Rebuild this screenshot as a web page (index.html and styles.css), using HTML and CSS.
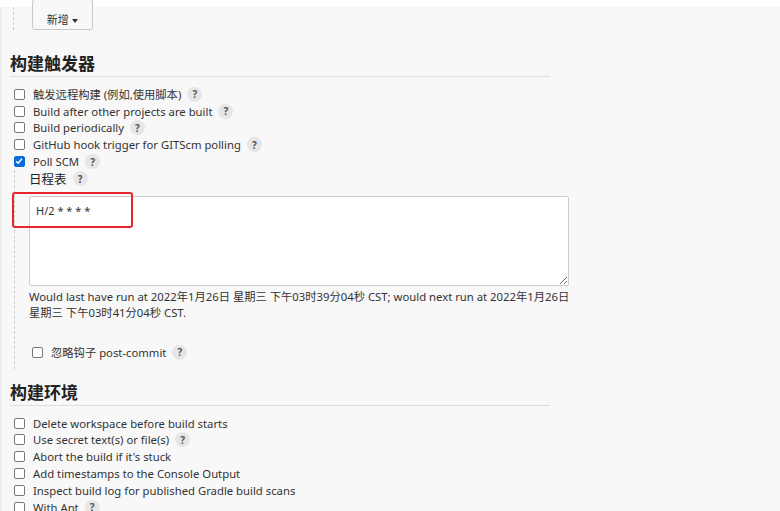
FILE: index.html
```html
<!DOCTYPE html>
<html>
<head>
    <meta charset="UTF-8">
    <title>构建配置</title>
    <link rel="stylesheet" href="styles.css">
</head>
<body>
    <div class="top-strip"></div>
    <div class="page">
        <div class="repeat-block">
            <button class="add-button">新增 <span class="caret"></span></button>
        </div>

        <h2 class="section-title">构建触发器</h2>
        <ul class="options">
            <li><span class="box"></span>触发远程构建 (例如,使用脚本) <span class="help">?</span></li>
            <li><span class="box"></span>Build after other projects are built <span class="help">?</span></li>
            <li><span class="box"></span>Build periodically <span class="help">?</span></li>
            <li><span class="box"></span>GitHub hook trigger for GITScm polling <span class="help">?</span></li>
            <li><span class="box checked"><svg viewBox="0 0 10 10" width="10" height="10"><path d="M2.2 5.2 L4.2 7.2 L7.9 2.8" fill="none" stroke="#fff" stroke-width="1.5"/></svg></span>Poll SCM <span class="help">?</span></li>
        </ul>

        <div class="nested">
            <div class="field-label">日程表 <span class="help">?</span></div>
            <div class="schedule">
                <textarea class="schedule-input">H/2 * * * *</textarea>
                <div class="highlight"></div>
            </div>
            <div class="schedule-info">Would last have run at 2022年1月26日 星期三 下午03时39分04秒 CST; would next run at 2022年1月26日 星期三 下午03时41分04秒 CST.</div>
            <ul class="options inner">
                <li><span class="box"></span>忽略钩子 post-commit <span class="help">?</span></li>
            </ul>
        </div>

        <h2 class="section-title second">构建环境</h2>
        <ul class="options">
            <li><span class="box"></span>Delete workspace before build starts</li>
            <li><span class="box"></span>Use secret text(s) or file(s) <span class="help">?</span></li>
            <li><span class="box"></span>Abort the build if it's stuck</li>
            <li><span class="box"></span>Add timestamps to the Console Output</li>
            <li><span class="box"></span>Inspect build log for published Gradle build scans</li>
            <li><span class="box"></span>With Ant <span class="help">?</span></li>
        </ul>
    </div>
</body>
</html>
```

FILE: styles.css
```css
html, body {
    margin: 0;
    padding: 0;
    height: 100%;
    overflow: hidden;
}
body {
    font-family: 'Noto Sans', 'Noto Sans CJK SC', sans-serif;
    font-size: 11.3px;
    color: #333;
    background: #fff;
}
.top-strip {
    height: 7px;
    background: #fff;
}
.page {
    background: #f8f8f8;
    border-left: 2px solid #eee;
    padding-left: 8px;
    min-height: 504px;
    box-sizing: border-box;
}
.repeat-block {
    margin-left: 3px;
    border-left: 1px dashed #ccc;
    height: 23px;
    padding-left: 18px;
}
.add-button {
    display: block;
    position: relative;
    top: -8px;
    height: 31px;
    width: 61px;
    padding: 8px 0 0;
    background: #f8f8f8;
    border: 1px solid #c8c8c8;
    border-radius: 3px;
    font-family: 'Noto Sans CJK SC', sans-serif;
    font-size: 11px;
    color: #333;
}
.caret {
    display: inline-block;
    width: 0;
    height: 0;
    border-left: 3px solid transparent;
    border-right: 3px solid transparent;
    border-top: 4px solid #333;
    vertical-align: middle;
    margin-left: 1px;
}
.section-title {
    font-family: 'Noto Sans CJK SC', sans-serif;
    font-size: 17px;
    font-weight: 700;
    color: #222;
    margin: 21px 0 0;
    width: 540px;
    line-height: 24px;
    border-bottom: 1px solid #ddd;
    padding-bottom: 1px;
}
.section-title.second {
    margin-top: 11px;
}
.options {
    list-style: none;
    margin: 9px 0 0;
    padding: 0 0 0 4px;
}
.options li {
    display: flex;
    align-items: center;
    height: 16.8px;
    white-space: nowrap;
}
.box {
    width: 9px;
    height: 9px;
    border: 1px solid #777;
    border-radius: 2px;
    background: #fff;
    margin-right: 8px;
    flex: none;
    display: flex;
}
.box.checked {
    background: #0a6cd6;
    border-color: #0a6cd6;
}
.box svg {
    margin: -1px 0 0 -1px;
}
.help {
    display: inline-flex;
    align-items: center;
    justify-content: center;
    width: 15px;
    height: 15px;
    margin-left: 6px;
    border-radius: 50%;
    background: #e6e6e6;
    color: #555;
    font-size: 10px;
    font-weight: 700;
}
.nested {
    margin-left: 4px;
    border-left: 1px dashed #ccc;
    padding: 2px 0 8px 14px;
}
.field-label {
    display: flex;
    align-items: center;
    font-family: 'Noto Sans CJK SC', sans-serif;
    font-size: 12.5px;
    color: #222;
    height: 14px;
}
.schedule {
    position: relative;
    margin-top: 10px;
}
.schedule-input {
    display: block;
    width: 540px;
    height: 90px;
    box-sizing: border-box;
    padding: 6px 6px;
    border: 1px solid #ccc;
    border-radius: 2px;
    background: #fff;
    font-family: 'Noto Sans', sans-serif;
    font-size: 11px;
    color: #333;
    resize: vertical;
}
.highlight {
    position: absolute;
    left: -17px;
    top: -4px;
    width: 117px;
    height: 32px;
    border: 2px solid #e8262a;
    border-radius: 3px;
    pointer-events: none;
}
.schedule-info {
    width: 545px;
    margin-top: 3px;
    font-size: 11.3px;
    line-height: 16px;
    color: #333;
}
.options.inner {
    margin-top: 23px;
    padding-left: 3px;
}
```
